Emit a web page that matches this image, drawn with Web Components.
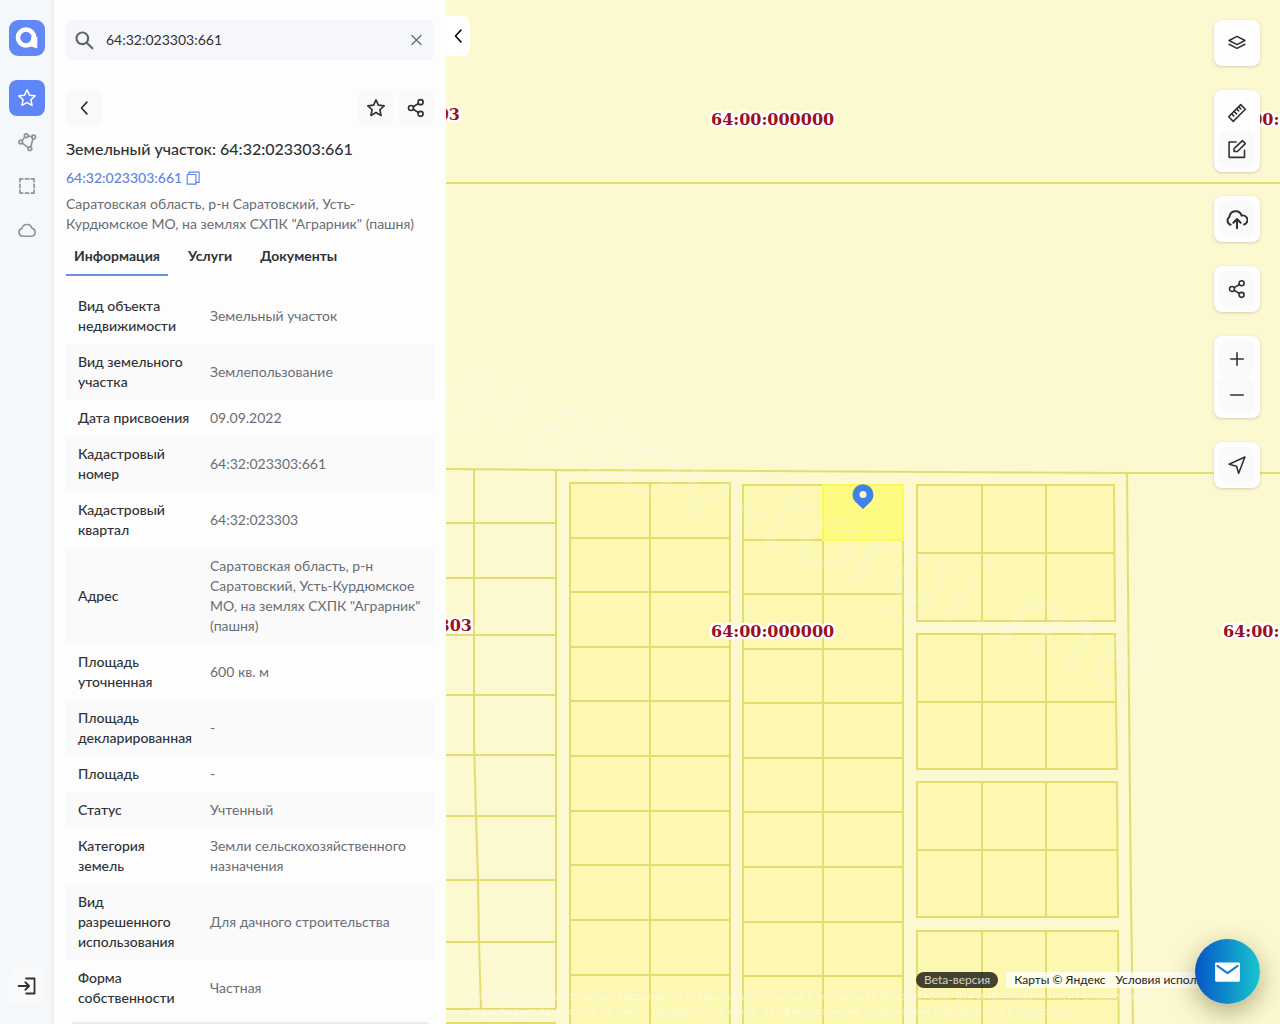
<!DOCTYPE html>
<html lang="ru">
<head>
<meta charset="utf-8">
<title>64:32:023303:661</title>
<style>
html, body { margin: 0; height: 100%; }
body { font-family: Lato, "Open Sans", sans-serif; font-size: 14px; line-height: 20px; color: #303236; overflow: hidden; }
</style>
</head>
<body>
<cadastre-app></cadastre-app>
<script>
const ICONS = {
  logo: '<circle cx="11" cy="11.500" r="8" stroke-width="4.600"/><path d="M17.500 11h4.300v10.800l-6.500-2z" fill="currentColor" stroke-width="1"/>',
  star: '<path d="M12 2.300l2.900 6.300 6.900.8-5.100 4.700 1.400 6.800-6.100-3.400-6.100 3.400 1.400-6.800-5.100-4.700 6.900-.8z"/>',
  nodes: '<circle cx="4.500" cy="12" r="2.200"/><circle cx="11" cy="4.500" r="2.200"/><circle cx="20" cy="6" r="2.200"/><circle cx="15.500" cy="20" r="2.200"/><path d="M6 10.300l3.500-4.200M13.200 4.800l4.600.8M19.200 8.100l-2.900 9.800M6.300 13.300l7.300 5.400"/>',
  frame: '<path d="M3.500 7V3.500H7M10 3.500h4M17 3.500h3.500V7M20.500 10v4M20.500 17v3.500H17M14 20.500h-4M7 20.500H3.500V17M3.500 14v-4"/>',
  cloud: '<path d="M7 19.500a4.700 4.700 0 0 1-1.200-9.200 6.300 6.300 0 0 1 12.200-.4A4.900 4.900 0 0 1 17.500 19.500z"/>',
  login: '<path d="M11 3h10v18H11M2 12h12M10 7.500L14.500 12 10 16.500"/>',
  search: '<circle cx="10" cy="10" r="7"/><path d="M15.300 15.300L22 22"/>',
  close: '<path d="M6.500 6l12 12M18.500 6L6.500 18"/>',
  left: '<path d="M15.500 5L9 12l6.500 7"/>',
  share: '<circle cx="6" cy="12" r="3"/><circle cx="17.500" cy="5" r="3"/><circle cx="17.500" cy="19" r="3"/><path d="M8.700 10.400l6.200-3.800M8.700 13.600l6.200 3.800"/>',
  copy: '<path d="M2 6h15v16.500H2z"/><path d="M5 6V2h17.500v17.500H17"/>',
  layers: '<path d="M12 4l9.500 5L12 14 2.500 9z"/><path d="M2.500 13.500L12 18.500l9.500-5"/>',
  ruler: '<path d="M2 16.500L16.500 2l5.500 5.500L7.500 22z"/><path d="M5.500 13l2.500 2.500M8.500 10l3 3M11.500 7l2.500 2.500M14 4.500l2.500 2.500"/>',
  edit: '<path d="M11 3.500H2.500v18.500H21V13.500"/><path d="M18.500 2l3.500 3.500-9.500 9.500h-4v-3.500z"/>',
  upload: '<path d="M5 18.300A5 5 0 0 1 3.800 9.500 6.800 6.800 0 0 1 17 8.300a5 5 0 0 1 2.700 9.700"/><path d="M12 22v-9.500M8 16l4-4 4 4"/>',
  plus: '<path d="M12 4.500v15M4.500 12h15"/>',
  minus: '<path d="M4.500 12h15"/>',
  locate: '<path d="M21.500 2.500L2.500 11l9 2.500 2.500 8.500z"/>',
  mail: '<path d="M2 4h20a1 1 0 0 1 1 1v15a1 1 0 0 1-1 1H2a1 1 0 0 1-1-1V5a1 1 0 0 1 1-1z" fill="currentColor" stroke="none"/><path d="M3 7l9 6.500L21 7" stroke="#0f7fd0" stroke-width="1.800"/>'
};

class UiIcon extends HTMLElement {
  connectedCallback() {
    this.attachShadow({ mode: 'open' }).innerHTML = `
      <style>
        :host { display: inline-flex; flex: none; width: var(--size, 22px); height: var(--size, 22px); }
        svg { width: 100%; height: 100%; fill: none; stroke: currentColor; stroke-width: var(--weight, 1.8); stroke-linejoin: round; stroke-linecap: round; }
      </style>
      <svg viewBox="0 0 24 24" aria-hidden="true">${ICONS[this.getAttribute('name')]}</svg>`;
  }
}
customElements.define('ui-icon', UiIcon);

class IconButton extends HTMLElement {
  connectedCallback() {
    this.attachShadow({ mode: 'open' }).innerHTML = `
      <style>
        :host { display: block; flex: none; }
        button { display: flex; align-items: center; justify-content: center; width: 36px; height: 36px; padding: 0; border: 0; border-radius: 8px; background: var(--fill, #fafafb); color: inherit; cursor: pointer; }
      </style>
      <button type="button" aria-label="${this.getAttribute('label')}"><ui-icon name="${this.getAttribute('icon')}"></ui-icon></button>`;
  }
}
customElements.define('icon-button', IconButton);

class SideRail extends HTMLElement {
  connectedCallback() {
    this.attachShadow({ mode: 'open' }).innerHTML = `
      <style>
        :host { display: flex; flex-direction: column; justify-content: space-between; align-items: center; box-sizing: border-box; width: 54px; padding: 20px 0; background: #f4f8fb; box-shadow: inset -2px 0 #ebf0f5; color: #8e949b; }
        nav { display: flex; flex-direction: column; gap: 8px; }
        .brand { display: flex; align-items: center; justify-content: center; width: 36px; height: 36px; margin-bottom: 16px; border-radius: 9px; background: #6288f5; color: #fff; --size: 24px; }
        .on { color: #fff; --fill: #5f86f8; --size: 20px; --weight: 1.8; }
        .off { --fill: transparent; --size: 20px; --weight: 2; }
        .exit { color: #303236; --size: 20px; --weight: 2.2; }
      </style>
      <nav>
        <a class="brand" href="#" aria-label="Главная"><ui-icon name="logo"></ui-icon></a>
        <icon-button class="on" icon="star" label="Избранное"></icon-button>
        <icon-button class="off" icon="nodes" label="Полигон"></icon-button>
        <icon-button class="off" icon="frame" label="Выделение"></icon-button>
        <icon-button class="off" icon="cloud" label="Облако"></icon-button>
      </nav>
      <icon-button class="exit" icon="login" label="Войти"></icon-button>`;
  }
}
customElements.define('side-rail', SideRail);

class SearchBox extends HTMLElement {
  connectedCallback() {
    this.attachShadow({ mode: 'open' }).innerHTML = `
      <style>
        :host { display: flex; align-items: center; gap: 8px; height: 40px; padding-left: 8px; background: #f5f7fb; border-radius: 4px; }
        label { display: flex; color: #62666c; --size: 20px; --weight: 2.6; }
        input { flex: 1; min-width: 0; padding: 0 0 0 4px; border: 0; outline: 0; background: none; font: inherit; color: #303236; }
        icon-button { --fill: transparent; --size: 18px; --weight: 1.6; color: #62666c; }
      </style>
      <label for="q"><ui-icon name="search"></ui-icon></label>
      <input id="q" type="text" aria-label="Поиск" value="64:32:023303:661">
      <icon-button icon="close" label="Очистить"></icon-button>`;
  }
}
customElements.define('search-box', SearchBox);

const ROWS = [
  ['Вид объекта недвижимости', 'Земельный участок'],
  ['Вид земельного участка', 'Землепользование'],
  ['Дата присвоения', '09.09.2022'],
  ['Кадастровый номер', '64:32:023303:661'],
  ['Кадастровый квартал', '64:32:023303'],
  ['Адрес', 'Саратовская область, р-н Саратовский, Усть-Курдюмское МО, на землях СХПК "Аграрник" (пашня)'],
  ['Площадь уточненная', '600 кв. м'],
  ['Площадь декларированная', '-'],
  ['Площадь', '-'],
  ['Статус', 'Учтенный'],
  ['Категория земель', 'Земли сельскохозяйственного назначения'],
  ['Вид разрешенного использования', 'Для дачного строительства'],
  ['Форма собственности', 'Частная']
];

class InfoTable extends HTMLElement {
  connectedCallback() {
    this.attachShadow({ mode: 'open' }).innerHTML = `
      <style>
        :host { display: block; }
        table { width: 100%; border-collapse: collapse; table-layout: fixed; }
        th, td { text-align: left; vertical-align: middle; }
        th { width: 115px; padding: 8px 5px 8px 12px; font-weight: 500; }
        td { padding: 8px 12px; color: #6a6e74; }
        tr:nth-child(even) { background: #fafafb; }
      </style>
      <table><tbody>${ROWS.map(([k, v]) => `<tr><th scope="row">${k}</th><td>${v}</td></tr>`).join('')}</tbody></table>`;
  }
}
customElements.define('info-table', InfoTable);

class ObjectPanel extends HTMLElement {
  connectedCallback() {
    this.attachShadow({ mode: 'open' }).innerHTML = `
      <style>
        :host { display: block; box-sizing: border-box; width: 392px; padding: 20px 12px 0; background: #fdfdfe; overflow: hidden; }
        .actions { display: flex; gap: 4px; margin-top: 30px; --size: 20px; --weight: 2; }
        .actions :first-child { margin-right: auto; }
        h1 { margin: 10px 0 6px; font-size: 16px; line-height: 26px; font-weight: 500; }
        .number { display: flex; align-items: center; gap: 4px; color: #5d86e0; }
        a { color: inherit; text-decoration: none; font-weight: 500; }
        .copy { display: flex; padding: 0; border: 0; background: none; color: inherit; --size: 14px; --weight: 2; }
        address { margin: 6px 0 2px; font-style: normal; color: #6a6e74; }
        .tabs { display: flex; gap: 12px; margin-bottom: 12px; }
        .tabs button { height: 40px; padding: 0 8px; border: solid transparent; border-width: 2px 0; background: none; font: inherit; font-weight: 700; color: #303236; }
        .tabs [aria-selected=true] { border-bottom-color: #6b90e8; }
        hr { margin: 6px; border: 0; border-top: 2px solid #ececef; }
      </style>
      <search-box></search-box>
      <div class="actions">
        <icon-button icon="left" label="Назад"></icon-button>
        <icon-button icon="star" label="В избранное"></icon-button>
        <icon-button icon="share" label="Поделиться"></icon-button>
      </div>
      <h1>Земельный участок: 64:32:023303:661</h1>
      <div class="number"><a href="#">64:32:023303:661</a><button class="copy" type="button" aria-label="Скопировать"><ui-icon name="copy"></ui-icon></button></div>
      <address>Саратовская область, р-н Саратовский, Усть-Курдюмское МО, на землях СХПК "Аграрник" (пашня)</address>
      <div class="tabs" role="tablist">
        <button type="button" role="tab" aria-selected="true">Информация</button>
        <button type="button" role="tab" aria-selected="false">Услуги</button>
        <button type="button" role="tab" aria-selected="false">Документы</button>
      </div>
      <info-table></info-table>
      <hr>`;
  }
}
customElements.define('object-panel', ObjectPanel);

class ParcelMap extends HTMLElement {
  block(xs, ys, right) {
    const [l, r] = [xs[0], xs[xs.length - 1]], [t, b] = [ys[0], ys[ys.length - 1]];
    const rr = right || r;
    let d = `M${l} ${t}H${r}L${rr} ${b}H${l}Z`;
    for (const x of xs.slice(1, -1)) d += `M${x} ${t}V${b}`;
    for (const y of ys.slice(1, -1)) d += `M${l} ${y}H${r + (rr - r) * (y - t) / (b - t)}`;
    return `<path class="lot" d="${d}"/>`;
  }
  connectedCallback() {
    const left = [523, 578, 635, 695, 755, 816, 880, 942, 1009].map(y => `M440 ${y}H556`).join('');
    const label = (x, y, s, end) => `<text class="quarter" x="${x}" y="${y}"${end ? ' text-anchor="end"' : ''}>${s}</text>`;
    this.attachShadow({ mode: 'open' }).innerHTML = `
      <style>
        :host { display: block; overflow: hidden; background: #fcf8d0; }
        svg { display: block; width: 100%; height: 100%; }
        .line { fill: none; stroke: #e4dd6e; stroke-width: 2; }
        .lot { fill: #fcf8b2; stroke: #e4dd6e; stroke-width: 2; }
        .quarter { font: bold 16px "DejaVu Serif", serif; fill: #9a1020; stroke: #fff; stroke-width: 5px; stroke-linejoin: round; paint-order: stroke; }
        .mark { font: italic 98px "DejaVu Sans", sans-serif; fill: #fff; fill-opacity: .12; }
        .note { font: 11px "Open Sans", sans-serif; fill: #fff; fill-opacity: .5; }
      </style>
      <svg role="img" aria-label="Карта участков"><g transform="translate(-446 0)">
        <path class="line" d="M440 183H3000M440 469L557 470L1127 473L3000 472M474 469V740L476 816L478 880L479 942L481 1009M556 470V1009M1127 473L1129 700L1131 900L1133 1024M440 1023H556${left}"/>
        ${this.block([570, 650, 730], [483, 538, 592, 647, 701, 756, 811, 865, 920, 975, 1029])}
        ${this.block([743, 823, 903], [485, 540, 594, 649, 703, 758, 812, 867, 922, 976, 1031])}
        ${this.block([917, 982, 1046, 1114], [485, 553, 621], 1115)}
        ${this.block([917, 982, 1046, 1115], [634, 702, 769], 1117)}
        ${this.block([917, 982, 1046, 1117], [782, 850, 917], 1118)}
        ${this.block([917, 982, 1046, 1118], [931, 999, 1066], 1119)}
        <path d="M823 485H903V540H823Z" fill="#fcfa80" stroke="#fafa50" stroke-width="2"/>
        <text class="mark" transform="translate(428 410) rotate(22)">aratov-torgi.me</text>
        <text class="note" x="470" y="1000">Данный ресурс использует сведения из открытых источников и не связан с Росреестром. Вся информация носит справочный</text>
        <text class="note" x="470" y="1015">гарантирует точность и не имеет юридической силы. За официальными сведениями обращайтесь в Росреестр.</text>
        ${label(460, 120, '03', 1)}
        ${label(472, 631, '303', 1)}
        ${label(711, 125, '64:00:000000')}
        ${label(711, 637, '64:00:000000')}
        ${label(1223, 125, '64:00:')}
        ${label(1223, 637, '64:00:')}
        <path d="M863 509L855 501.500A10.500 10.500 0 1 1 871 501.500Z" fill="#3f83ea"/><circle cx="863" cy="494.500" r="3.500" fill="#fcfad0"/>
      </g></svg>`;
  }
}
customElements.define('parcel-map', ParcelMap);

class ToolCard extends HTMLElement {
  connectedCallback() {
    this.attachShadow({ mode: 'open' }).innerHTML = `
      <style>:host { display: block; padding: 5px; border-radius: 8px; background: #fefefe; box-shadow: 0 1px 3px rgba(60, 70, 60, .22); --size: 20px; --weight: 1.9; }</style>
      <slot></slot>`;
  }
}
customElements.define('tool-card', ToolCard);

class CadastreApp extends HTMLElement {
  connectedCallback() {
    this.attachShadow({ mode: 'open' }).innerHTML = `
      <style>
        :host { display: flex; height: 100vh; }
        main { position: relative; flex: 1; min-width: 0; display: flex; }
        parcel-map { flex: 1; min-width: 0; }
        .collapse { position: absolute; left: 0; top: 16px; display: flex; align-items: center; justify-content: center; width: 24px; height: 40px; padding: 0; border: 0; border-radius: 0 8px 8px 0; background: #fff; color: #111; --size: 20px; --weight: 2; }
        .tools { position: absolute; right: 20px; top: 20px; display: flex; flex-direction: column; gap: 24px; }
        .plain { --fill: transparent; }
        .upload { --size: 22px; --weight: 2.2; }
        footer { position: absolute; left: 470px; right: 20px; bottom: 36px; display: flex; gap: 8px; font-size: 12px; line-height: 16px; white-space: nowrap; }
        .beta { padding: 0 8px; border-radius: 8px; background: rgba(20, 20, 10, .8); color: #d4d4c6; }
        .legal { display: flex; gap: 10px; padding: 0 8px; background: rgba(255, 255, 255, .7); overflow: hidden; }
        .legal a { color: #222; text-decoration: none; }
        .mail { position: absolute; right: 20px; bottom: 20px; display: flex; align-items: center; justify-content: center; width: 65px; height: 65px; padding: 0; border: 0; border-radius: 50%; background: linear-gradient(90deg, #0656c8, #18c4cf); color: #fff; box-shadow: 0 8px 26px rgba(60, 60, 20, .4); --size: 27px; }
      </style>
      <side-rail></side-rail>
      <object-panel></object-panel>
      <main>
        <parcel-map></parcel-map>
        <button class="collapse" type="button" aria-label="Свернуть"><ui-icon name="left"></ui-icon></button>
        <div class="tools">
          <tool-card><icon-button class="plain" icon="layers" label="Слои"></icon-button></tool-card>
          <tool-card><icon-button class="plain" icon="ruler" label="Линейка"></icon-button><icon-button icon="edit" label="Рисовать"></icon-button></tool-card>
          <tool-card><icon-button class="upload" icon="upload" label="Загрузить"></icon-button></tool-card>
          <tool-card><icon-button icon="share" label="Поделиться"></icon-button></tool-card>
          <tool-card><icon-button icon="plus" label="Приблизить"></icon-button><icon-button icon="minus" label="Отдалить"></icon-button></tool-card>
          <tool-card><icon-button icon="locate" label="Моё местоположение"></icon-button></tool-card>
        </div>
        <footer>
          <span class="beta">Beta-версия</span>
          <div class="legal"><a href="#">Карты © Яндекс</a><a href="#">Условия использования</a></div>
        </footer>
        <button class="mail" type="button" aria-label="Написать нам"><ui-icon name="mail"></ui-icon></button>
      </main>`;
  }
}
customElements.define('cadastre-app', CadastreApp);
</script>
</body>
</html>
